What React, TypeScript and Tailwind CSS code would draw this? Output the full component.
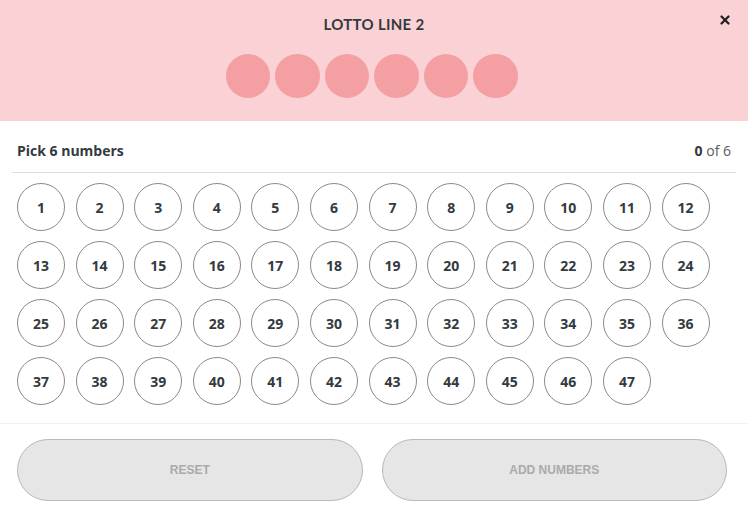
import { X } from 'lucide-react';

const numbers = Array.from({ length: 47 }, (_, i) => i + 1);

export default function App() {
  return (
    <div className="h-[515px] w-[748px] overflow-hidden bg-white font-['Open_Sans',sans-serif] text-[#333a40]">
      <div className="relative flex h-[121px] flex-col items-center bg-[#fad2d5] pt-[15px]">
        <h3 className="font-['Lato',sans-serif] text-[15px] font-bold leading-[18px] tracking-[0.3px]">LOTTO LINE 2</h3>
        <button
          type="button"
          aria-label="Close"
          className="absolute right-[16px] top-[13px] text-[#222]"
        >
          <X className="h-[14px] w-[14px]" strokeWidth={4} />
        </button>
        <div className="mr-[5px] mt-[21px] flex gap-[5px]">
          {Array.from({ length: 6 }).map((_, i) => (
            <div key={i} className="h-[44px] w-[44.5px] rounded-full bg-[#f4a0a3]" />
          ))}
        </div>
      </div>

      <div className="px-[12px]">
        <div className="flex items-center justify-between border-b border-[#dddddd] pl-[5px] pr-[5px] pt-[21px] pb-[12px] text-[14px] leading-[18px]">
          <span className="font-bold">Pick 6 numbers</span>
          <span className="text-[#555c62]">
            <span className="font-bold text-[#333a40]">0</span> of 6
          </span>
        </div>
        <div className="grid grid-cols-[repeat(12,48px)] gap-x-[10.6px] gap-y-[10px] pl-[5px] pt-[10px] pb-[18px]">
          {numbers.map((n) => (
            <button
              key={n}
              type="button"
              className="flex h-[48px] w-[48px] items-center justify-center rounded-full border border-[#8a8a8a] bg-white text-[14px] font-bold text-[#333a40]"
            >
              {n}
            </button>
          ))}
        </div>
      </div>

      <div className="flex gap-[19px] border-t border-[#f2f2f2] pl-[17px] pr-[21px] pt-[15px] font-['Liberation_Sans',sans-serif]">
        <button
          type="button"
          className="h-[62px] flex-1 rounded-full border border-[#b8b8b8] bg-[#e6e6e6] text-[12px] font-bold text-[#aaaaaa]"
        >
          RESET
        </button>
        <button
          type="button"
          className="h-[62px] flex-1 rounded-full border border-[#b8b8b8] bg-[#e6e6e6] text-[12px] font-bold text-[#aaaaaa]"
        >
          ADD NUMBERS
        </button>
      </div>
    </div>
  );
}
